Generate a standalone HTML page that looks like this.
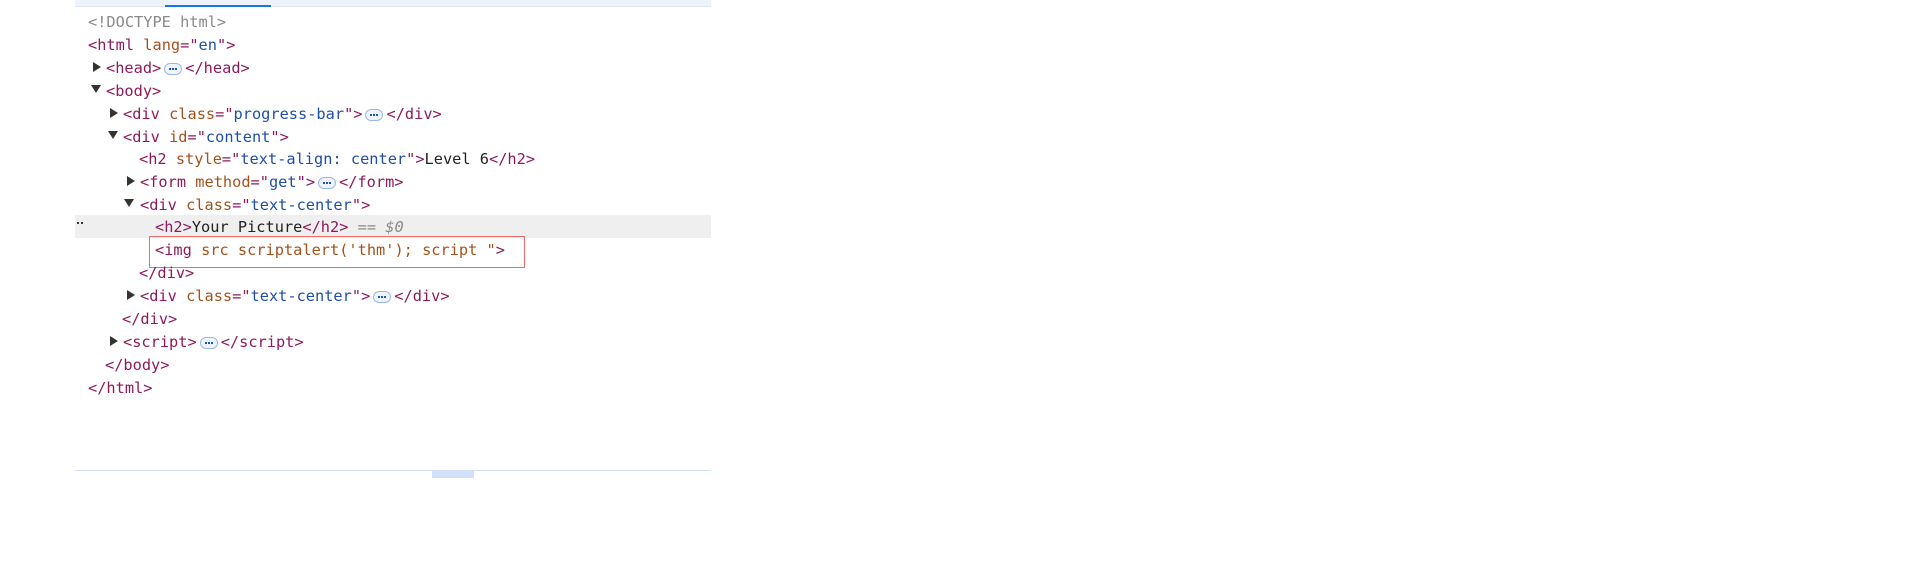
<!DOCTYPE html>
<html><head><style>
body{margin:0;width:1920px;height:563px;background:#fff;position:relative;overflow:hidden;font-family:"DejaVu Sans Mono","Liberation Mono",monospace;font-size:15.3px;}
.top{position:absolute;left:75px;top:0;width:636px;height:6px;background:#eef2fa;border-bottom:1px solid #dfe6f3}
.tab{position:absolute;left:165px;top:5px;width:106px;height:2px;background:#1a73e8}
.l{position:absolute;height:23px;line-height:23px;white-space:pre;color:#222;margin-top:1px}
.t{color:#8e1a5c}.a{color:#a4521c}.v{color:#1f4fa8}.c{color:#8a8a8a}
.ar{position:absolute;width:0;height:0}
.r{border-top:5px solid transparent;border-bottom:5px solid transparent;border-left:8px solid #333}
.d{border-left:5px solid transparent;border-right:5px solid transparent;border-top:8px solid #333}
.e{display:inline-block;width:18px;height:12px;border:1px solid #9bb7e8;border-radius:6px;background:#eef3fd;vertical-align:middle;margin:0 3px;box-sizing:border-box;position:relative}
.e:after{content:"";position:absolute;left:4px;top:4px;width:2px;height:2px;background:#1a55c8;box-shadow:3px 0 0 #1a55c8,6px 0 0 #1a55c8}
</style></head><body>
<div class="top"></div><div class="tab"></div>
<div style="position:absolute;left:75px;top:215px;width:636px;height:23px;background:#efefef"></div>
<div style="position:absolute;left:77px;top:222px;width:2px;height:2px;background:#333;box-shadow:4px 0 0 #333"></div>
<div style="position:absolute;left:149px;top:236px;width:376px;height:32px;border:1.5px solid #ef6b6b;box-sizing:border-box"></div>
<div style="position:absolute;left:75px;top:470px;width:636px;height:1px;background:#d5e1f5"></div>
<div style="position:absolute;left:432px;top:470px;width:42px;height:8px;background:#d2e0f8"></div>

<div class="l c" style="left:88px;top:10px">&lt;!DOCTYPE html&gt;</div>
<div class="l" style="left:88px;top:33px"><span class="t">&lt;html</span> <span class="a">lang</span><span class="t">="</span><span class="v">en</span><span class="t">"&gt;</span></div>
<div class="ar r" style="left:93px;top:62px"></div>
<div class="l" style="left:106px;top:56px"><span class="t">&lt;head&gt;</span><span class="e"></span><span class="t">&lt;/head&gt;</span></div>
<div class="ar d" style="left:91px;top:85px"></div>
<div class="l t" style="left:106px;top:79px">&lt;body&gt;</div>
<div class="ar r" style="left:110px;top:108px"></div>
<div class="l" style="left:123px;top:102px"><span class="t">&lt;div</span> <span class="a">class</span><span class="t">="</span><span class="v">progress-bar</span><span class="t">"&gt;</span><span class="e"></span><span class="t">&lt;/div&gt;</span></div>
<div class="ar d" style="left:108px;top:131px"></div>
<div class="l" style="left:123px;top:125px"><span class="t">&lt;div</span> <span class="a">id</span><span class="t">="</span><span class="v">content</span><span class="t">"&gt;</span></div>
<div class="l" style="left:139px;top:147px"><span class="t">&lt;h2</span> <span class="a">style</span><span class="t">="</span><span class="v">text-align: center</span><span class="t">"&gt;</span>Level 6<span class="t">&lt;/h2&gt;</span></div>
<div class="ar r" style="left:127px;top:176px"></div>
<div class="l" style="left:140px;top:170px"><span class="t">&lt;form</span> <span class="a">method</span><span class="t">="</span><span class="v">get</span><span class="t">"&gt;</span><span class="e"></span><span class="t">&lt;/form&gt;</span></div>
<div class="ar d" style="left:124px;top:199px"></div>
<div class="l" style="left:140px;top:193px"><span class="t">&lt;div</span> <span class="a">class</span><span class="t">="</span><span class="v">text-center</span><span class="t">"&gt;</span></div>
<div class="l" style="left:155px;top:215px"><span class="t">&lt;h2&gt;</span>Your Picture<span class="t">&lt;/h2&gt;</span> <span class="c" style="font-style:italic">== $0</span></div>
<div class="l" style="left:155px;top:238px"><span class="t">&lt;img</span> <span class="a">src scriptalert('thm'); script "</span><span class="t">&gt;</span></div>
<div class="l t" style="left:139px;top:261px">&lt;/div&gt;</div>
<div class="ar r" style="left:127px;top:290px"></div>
<div class="l" style="left:140px;top:284px"><span class="t">&lt;div</span> <span class="a">class</span><span class="t">="</span><span class="v">text-center</span><span class="t">"&gt;</span><span class="e"></span><span class="t">&lt;/div&gt;</span></div>
<div class="l t" style="left:122px;top:307px">&lt;/div&gt;</div>
<div class="ar r" style="left:110px;top:336px"></div>
<div class="l" style="left:123px;top:330px"><span class="t">&lt;script&gt;</span><span class="e"></span><span class="t">&lt;/script&gt;</span></div>
<div class="l t" style="left:105px;top:353px">&lt;/body&gt;</div>
<div class="l t" style="left:88px;top:376px">&lt;/html&gt;</div>
</body></html>
